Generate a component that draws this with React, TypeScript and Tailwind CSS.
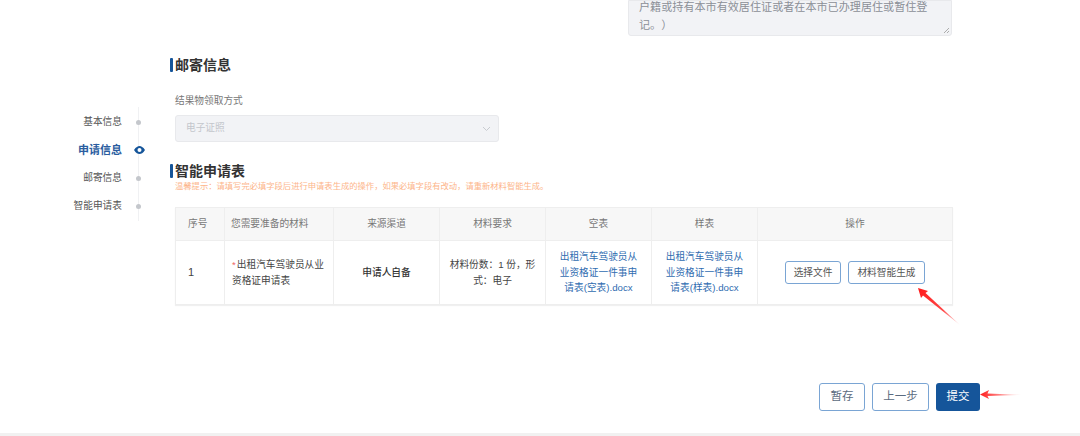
import React from "react";

const font = { fontFamily: '"Liberation Sans","Noto Sans CJK SC",sans-serif' };

function SectionTitle({ children }: { children: React.ReactNode }) {
  return (
    <div className="flex items-center h-[16px] -ml-[5px]">
      <span className="w-[3px] h-[14px] bg-[#15559a] rounded-[1px] mr-[2px]" />
      <span className="text-[14px] leading-[16px] font-bold text-[#333]">{children}</span>
    </div>
  );
}

function NavItem({ label, active }: { label: string; active?: boolean }) {
  return (
    <div className="h-[28px] flex items-center relative">
      <span
        className={
          active
            ? "w-[122px] text-right text-[11px] font-bold text-[#2a5d9f]"
            : "w-[122px] text-right text-[9.7px] text-[#555]"
        }
      >
        {label}
      </span>
      {active ? (
        <svg className="absolute left-[134px]" width="11" height="8" viewBox="0 0 11 8">
          <path d="M0 4C2 1 3.800 0 5.500 0S9 1 11 4C9 7 7.200 8 5.500 8S2 7 0 4Z" fill="#15559a" />
          <circle cx="5.500" cy="4" r="2" fill="#fff" />
        </svg>
      ) : (
        <span className="absolute left-[136px] w-[5px] h-[5px] rounded-full bg-[#c4c7cc]" />
      )}
    </div>
  );
}

const cell = "border border-[#eeeeee] text-[9.7px] leading-[15.5px] [text-spacing-trim:space-all]";
const th = "border border-[#eeeeee] font-normal text-[9.7px] text-[#777]";

export default function App() {
  return (
    <div className="relative w-[1080px] h-[436px] bg-white overflow-hidden flex flex-col" style={font}>
      <div className="flex flex-1">
        <aside className="w-[170px] pt-[108px]">
          <div className="relative">
            <div className="absolute left-[138px] -top-px h-[114px] w-px bg-[#f0f1f3]" />
            <NavItem label="基本信息" />
            <NavItem label="申请信息" active />
            <NavItem label="邮寄信息" />
            <NavItem label="智能申请表" />
          </div>
        </aside>
        <main className="w-[782px] pl-[5px]">
          <div className="ml-[453px] w-[324px] h-[36px] bg-[#f2f3f6] border border-[#e8e9ec] rounded-b-[3px] pl-[10px] relative text-[11.1px] leading-[18px] text-[#8b8f96] [text-spacing-trim:space-all] overflow-hidden">
            <p className="-mt-[3px] whitespace-nowrap">户籍或持有本市有效居住证或者在本市已办理居住或暂住登</p>
            <p>记。）</p>
            <svg className="absolute right-[1px] bottom-[1px]" width="7" height="7" viewBox="0 0 7 7">
              <path d="M1 6 6 1M4 6 6 4" stroke="#999" strokeWidth="0.8" />
            </svg>
          </div>
          <div className="mt-[21px]">
            <SectionTitle>邮寄信息</SectionTitle>
          </div>
          <div className="mt-[21px] text-[9.7px] leading-[14px] text-[#777]">结果物领取方式</div>
          <div className="mt-[7px] w-[324px] h-[27px] bg-[#f2f3f6] border border-[#e8e9ec] rounded-[3px] flex items-center justify-between pl-[10px] pr-[7px]">
            <span className="text-[9.7px] text-[#c3c6cc]">电子证照</span>
            <svg width="9" height="6" viewBox="0 0 9 6" fill="none">
              <path d="M1 1 4.500 4.500 8 1" stroke="#c3c6cc" strokeWidth="0.9" />
            </svg>
          </div>
          <div className="mt-[21px]">
            <SectionTitle>智能申请表</SectionTitle>
          </div>
          <div className="mt-px text-[8.3px] leading-[12px] text-[#fdb58a] whitespace-nowrap">
            温馨提示：请填写完必填字段后进行申请表生成的操作，如果必填字段有改动，请重新材料智能生成。
          </div>
          <table className="mt-[15px] w-[777px] table-fixed border-collapse shadow-[0_1px_1px_rgba(0,0,0,0.06)]">
            <colgroup>
              <col className="w-[49px]" />
              <col className="w-[109px]" />
              <col className="w-[106px]" />
              <col className="w-[106px]" />
              <col className="w-[106px]" />
              <col className="w-[106px]" />
              <col className="w-[195px]" />
            </colgroup>
            <thead>
              <tr className="h-[33px] bg-[#f7f7f7]">
                <th className={`${th} text-left pl-[12px]`}>序号</th>
                <th className={`${th} text-left pl-[6px]`}>您需要准备的材料</th>
                <th className={`${th} text-center`}>来源渠道</th>
                <th className={`${th} text-center`}>材料要求</th>
                <th className={`${th} text-center`}>空表</th>
                <th className={`${th} text-center`}>样表</th>
                <th className={`${th} text-center`}>操作</th>
              </tr>
            </thead>
            <tbody>
              <tr className="h-[64px]">
                <td className={`${cell} text-left pl-[12px] text-[#444]`}>
                  <span className="text-[11px]">1</span>
                </td>
                <td className={`${cell} text-left pl-[7px] pr-[8px] text-[#444]`}>
                  <span className="text-[#e66] mr-px">*</span>出租汽车驾驶员从业资格证申请表
                </td>
                <td className={`${cell} text-center font-medium text-[#333]`}>申请人自备</td>
                <td className={`${cell} text-center px-[8px] text-[#444]`}>材料份数：1 份，形式：电子</td>
                <td className={`${cell} text-center px-[13px] text-[#2f6cb0]`}>出租汽车驾驶员从业资格证一件事申请表(空表).docx</td>
                <td className={`${cell} text-center px-[13px] text-[#2f6cb0]`}>出租汽车驾驶员从业资格证一件事申请表(样表).docx</td>
                <td className={`${cell} text-center text-[#555]`}>
                  <div className="flex justify-center gap-[7px]">
                    <button className="w-[56px] h-[23px] border border-[#7aa5d4] rounded-[3px] bg-white">选择文件</button>
                    <button className="w-[77px] h-[23px] border border-[#7aa5d4] rounded-[3px] bg-white">材料智能生成</button>
                  </div>
                </td>
              </tr>
            </tbody>
          </table>
        </main>
      </div>
      <div className="flex justify-start gap-[7px] pl-[819px] pb-[22px]">
        <button className="w-[46px] h-[28px] border border-[#7aa5d4] rounded-[3px] bg-white text-[11.5px] text-[#5b6b80]">暂存</button>
        <button className="w-[57px] h-[28px] border border-[#7aa5d4] rounded-[3px] bg-white text-[11.5px] text-[#5b6b80]">上一步</button>
        <button className="w-[44px] h-[28px] rounded-[3px] bg-[#15559a] text-[11.5px] text-white">提交</button>
      </div>
      <div className="h-[3px] bg-[#f1f1f1]" />
      <svg className="absolute left-0 top-0 pointer-events-none" width="1080" height="436" viewBox="0 0 1080 436">
        <defs>
          <linearGradient id="a" x1="0" y1="0" x2="1" y2="0">
            <stop offset="0" stopColor="#ff1a1a" />
            <stop offset="1" stopColor="#ff1a1a" stopOpacity="0" />
          </linearGradient>
          <linearGradient id="b" x1="0" y1="0" x2="1" y2="1">
            <stop offset="0" stopColor="#ff1a1a" />
            <stop offset="0.6" stopColor="#ff1a1a" stopOpacity="0.8" />
            <stop offset="1" stopColor="#ff1a1a" stopOpacity="0.05" />
          </linearGradient>
        </defs>
        <path d="M980 394.500 989 390 987.500 393.500 1022 394.800 987.500 396 989 399Z" fill="url(#a)" />
        <path d="M918 288 928 291 925.500 293 960 325 923 295.500 921 298Z" fill="url(#b)" />
      </svg>
    </div>
  );
}
